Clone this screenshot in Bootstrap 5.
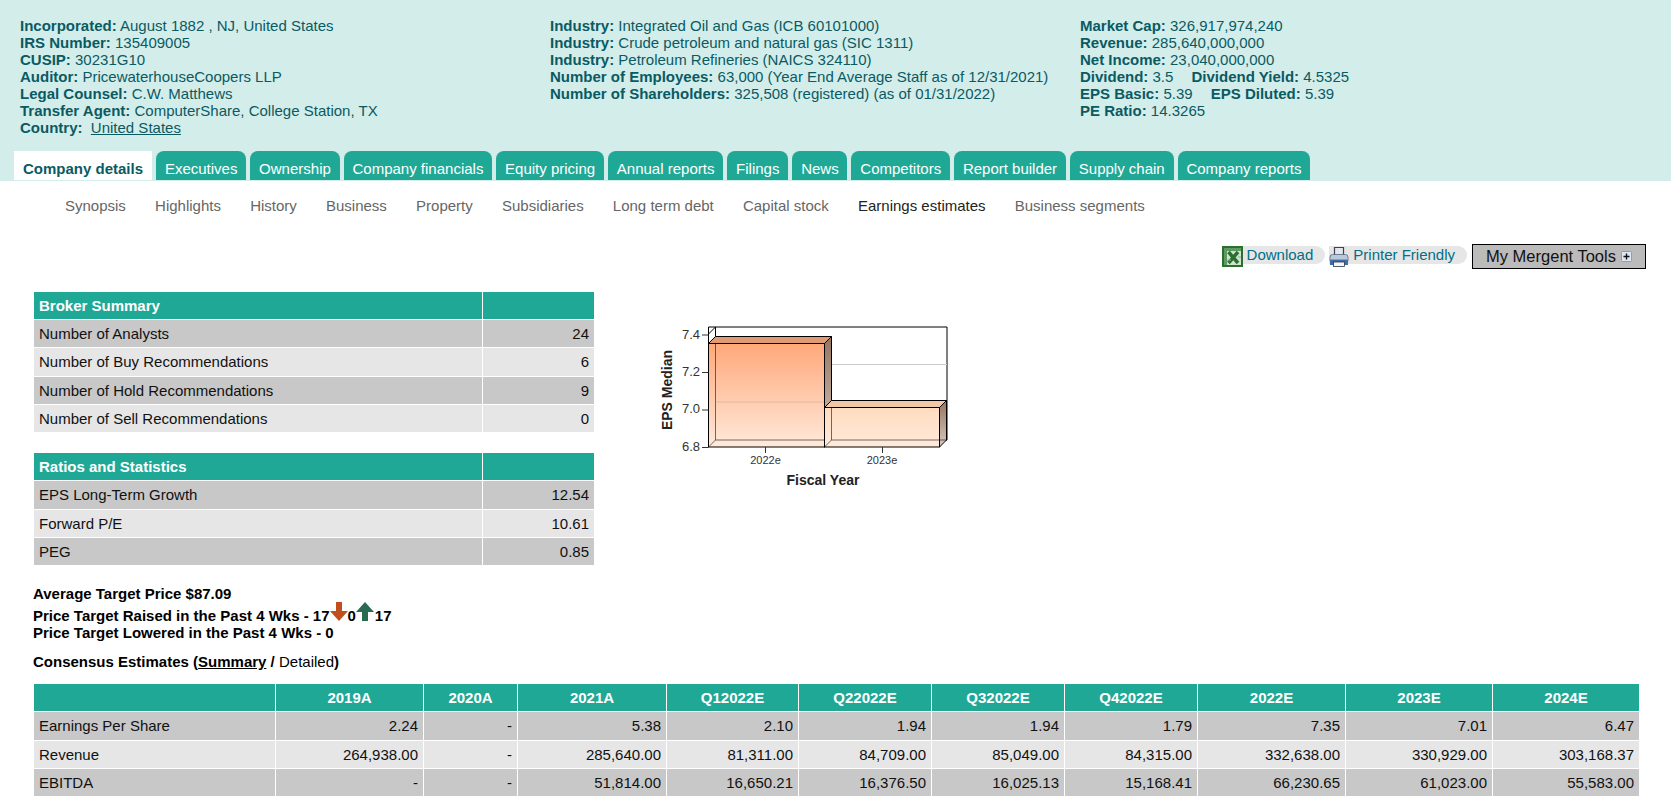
<!DOCTYPE html>
<html lang="en">
<head>
<meta charset="utf-8">
<title>Company details</title>
<link href="https://cdn.jsdelivr.net/npm/bootstrap@5.3.0/dist/css/bootstrap.min.css" rel="stylesheet">
<style>
body{font-family:"Liberation Sans",Arial,sans-serif;font-size:15px;line-height:17px;color:#000;background:#fff;overflow:hidden}
.co-head{background:#d3edea;color:#0a5a63;padding:17px 0 1px 14px}
.co-info{padding-left:6px;height:134px}
.co-col{width:530px;flex:none}
.co-col b{font-weight:700}
.co-col a{color:#0a5a63}
.co-gap{margin-left:14px}
.tabs{display:flex;gap:4px;height:29px}
.tab-i{background:#20a896;color:#fff;padding:9px 8.85px 0;border-radius:8px 8px 0 0;text-decoration:none;white-space:nowrap;flex:none}
.tab-i.on{background:#fff;color:#0a5a63;font-weight:700;border-radius:0;padding:9px 9px 0}
.subs{display:flex;gap:29.2px;padding:16px 0 0 65px;height:63px}
.subs a{color:#666;text-decoration:none;white-space:nowrap}
.subs a.on{color:#222}
.tools{display:flex;justify-content:flex-end;align-items:center;height:25px;padding-right:25px;gap:4px}
.pill{display:flex;align-items:flex-start;color:#006f88;background:#e6e6e6;border-radius:0 10px 10px 0;height:18px;padding-right:12px;text-decoration:none;white-space:nowrap;margin-top:-3px}
.pill svg{margin:0 4px -3px 0;flex:none}
.mytools{background:#bbb;border:1px solid #000;color:#111;font-size:16.5px;width:174px;height:25px;display:flex;align-items:center;justify-content:center;gap:5px;margin-left:1px}
.main{padding:22px 0 0 33px}
.table.mrg{table-layout:fixed;margin:0;border-collapse:collapse;color:#111}
.table.mrg>*>tr>*{background:#c8c8c8;box-shadow:none;border:1px solid #fff;padding:0 5px 1px;height:28px;vertical-align:middle;font-weight:400;color:#111}
.table.mrg>tbody>tr:nth-child(even)>*{background:#e6e6e6}
.table.mrg>thead>tr>*{background:#20a896;color:#fff;font-weight:700}
.table.mrg>tbody>tr.tall>*{height:29px}
.table.mrg td.num{text-align:right}
.table.mrg th.mid{text-align:center}
.side{width:562px;flex:none}
.table.mrg.tb-gap{margin-top:19px}
.chart-box{margin:19px 0 0 45px}
.chart-box text{font-family:"Liberation Sans",Arial,sans-serif}
.notes{font-weight:700;color:#000;margin-top:19px}
.notes .raised{display:flex;align-items:flex-start;height:17px;margin-top:5px}
.notes svg{flex:none;margin:-5px 0 -3px}
.notes svg.upa{margin-right:1px}
.cons{font-weight:700;margin:12px 0 13px}
.cons a{color:#000}
.cons span{font-weight:400}
.wide{width:1607px}
</style>
</head>
<body>
<div class="co-head">
  <div class="co-info d-flex">
    <div class="co-col">
      <div><b>Incorporated:</b> August 1882 , NJ, United States</div>
      <div><b>IRS Number:</b> 135409005</div>
      <div><b>CUSIP:</b> 30231G10</div>
      <div><b>Auditor:</b> PricewaterhouseCoopers LLP</div>
      <div><b>Legal Counsel:</b> C.W. Matthews</div>
      <div><b>Transfer Agent:</b> ComputerShare, College Station, TX</div>
      <div><b>Country:</b>&nbsp; <a href="#">United States</a></div>
    </div>
    <div class="co-col">
      <div><b>Industry:</b> Integrated Oil and Gas (ICB 60101000)</div>
      <div><b>Industry:</b> Crude petroleum and natural gas (SIC 1311)</div>
      <div><b>Industry:</b> Petroleum Refineries (NAICS 324110)</div>
      <div><b>Number of Employees:</b> 63,000 (Year End Average Staff as of 12/31/2021)</div>
      <div><b>Number of Shareholders:</b> 325,508 (registered) (as of 01/31/2022)</div>
    </div>
    <div class="co-col">
      <div><b>Market Cap:</b> 326,917,974,240</div>
      <div><b>Revenue:</b> 285,640,000,000</div>
      <div><b>Net Income:</b> 23,040,000,000</div>
      <div><b>Dividend:</b> 3.5 <b class="co-gap">Dividend Yield:</b> 4.5325</div>
      <div><b>EPS Basic:</b> 5.39 <b class="co-gap">EPS Diluted:</b> 5.39</div>
      <div><b>PE Ratio:</b> 14.3265</div>
    </div>
  </div>
  <nav class="tabs">
    <a class="tab-i on" href="#">Company details</a>
    <a class="tab-i" href="#">Executives</a>
    <a class="tab-i" href="#">Ownership</a>
    <a class="tab-i" href="#">Company financials</a>
    <a class="tab-i" href="#">Equity pricing</a>
    <a class="tab-i" href="#">Annual reports</a>
    <a class="tab-i" href="#">Filings</a>
    <a class="tab-i" href="#">News</a>
    <a class="tab-i" href="#">Competitors</a>
    <a class="tab-i" href="#">Report builder</a>
    <a class="tab-i" href="#">Supply chain</a>
    <a class="tab-i" href="#">Company reports</a>
  </nav>
</div>
<nav class="subs">
  <a href="#">Synopsis</a><a href="#">Highlights</a><a href="#">History</a><a href="#">Business</a><a href="#">Property</a><a href="#">Subsidiaries</a><a href="#">Long term debt</a><a href="#">Capital stock</a><a class="on" href="#">Earnings estimates</a><a href="#">Business segments</a>
</nav>
<div class="tools">
  <a class="pill" href="#">
    <svg width="21" height="21" viewBox="0 0 21 21"><rect width="21" height="21" fill="#2b7030"/><rect x="2" y="2" width="17" height="17" fill="#cfe3d0"/><path d="M2 2h17v3H2zM2 5h3v14H2z" fill="#5f9a63"/><path d="M6.500 6l9.500 11M16 6L6.500 17" stroke="#2b7030" stroke-width="3.500"/><path d="M16 11h3M5 14h4" stroke="#8db790"/></svg>
    Download
  </a>
  <a class="pill" href="#">
    <svg width="20" height="21" viewBox="0 0 20 21"><path d="M5.500 9V1.500h9V9" fill="#e4e7ea" stroke="#3c4350" stroke-width="1.200"/><path d="M1 11q0-2.500 2.500-2.500h13q2.500 0 2.500 2.500v4H1z" fill="#b9c8dc" stroke="#59677c" stroke-width=".8"/><path d="M1 14h18v5H1z" fill="#3f6ea6"/><path d="M1 13.500h18" stroke="#7fa2cf"/><rect x="4.500" y="16" width="11" height="4.500" fill="#f4f5f6" stroke="#2b3548" stroke-width=".8"/></svg>
    Printer Friendly
  </a>
  <div class="mytools">My Mergent Tools
    <svg width="11" height="11" viewBox="0 0 11 11"><rect x=".5" y=".5" width="10" height="10" rx="1" fill="#dfe7f2" stroke="#8b9db8"/><path d="M5.500 2.500v6M2.500 5.500h6" stroke="#111" stroke-width="1.400"/></svg>
  </div>
</div>
<div class="main">
  <div class="d-flex">
    <div class="side">
      <table class="table mrg">
        <colgroup><col style="width:449px"><col></colgroup>
        <thead><tr><th>Broker Summary</th><th></th></tr></thead>
        <tbody>
          <tr><td>Number of Analysts</td><td class="num">24</td></tr>
          <tr class="tall"><td>Number of Buy Recommendations</td><td class="num">6</td></tr>
          <tr><td>Number of Hold Recommendations</td><td class="num">9</td></tr>
          <tr><td>Number of Sell Recommendations</td><td class="num">0</td></tr>
        </tbody>
      </table>
      <table class="table mrg tb-gap">
        <colgroup><col style="width:449px"><col></colgroup>
        <thead><tr><th>Ratios and Statistics</th><th></th></tr></thead>
        <tbody>
          <tr class="tall"><td>EPS Long-Term Growth</td><td class="num">12.54</td></tr>
          <tr><td>Forward P/E</td><td class="num">10.61</td></tr>
          <tr><td>PEG</td><td class="num">0.85</td></tr>
        </tbody>
      </table>
    </div>
    <div class="chart-box">
      <svg width="320" height="190" viewBox="0 0 320 190">
        <defs>
          <linearGradient id="g1" x1="0" y1="0" x2="0" y2="1"><stop offset="0" stop-color="#ffa87a"/><stop offset="1" stop-color="#ffeadb"/></linearGradient>
          <linearGradient id="g2" x1="0" y1="0" x2="0" y2="1"><stop offset="0" stop-color="#ffdcc0"/><stop offset="1" stop-color="#ffeadb"/></linearGradient>
          <linearGradient id="g3" x1="0" y1="0" x2="0" y2="1"><stop offset="0" stop-color="#94745f"/><stop offset="1" stop-color="#d9c9bc"/></linearGradient>
        </defs>
        <g fill="none" stroke="#000">
          <path d="M68.500 24V17H307V130H75.500V17M68.500 24V137M68.500 24L75.500 17"/>
        </g>
        <path d="M75.500 92H307M75.500 54.500H307" stroke="#ccc"/>
        <path d="M68.500 33.500l7-7H191.500l-7 7z" fill="#e09a75" stroke="#000"/>
        <path d="M184.500 33.500l7-7V130l-7 7z" fill="url(#g3)" stroke="#000"/>
        <rect x="68.500" y="33.500" width="116" height="103.500" fill="url(#g1)" stroke="#000"/>
        <path d="M68.500 137l7-7H191.500M75.500 33.500V130" fill="none" stroke="#000" stroke-opacity=".55"/>
        <path d="M75.500 92H184" stroke="#b9a090" stroke-opacity=".45"/>
        <path d="M184.500 97.500l7-7H306.500l-7 7z" fill="#f2c9a8" stroke="#000"/>
        <path d="M299.500 97.500l7-7V130l-7 7z" fill="url(#g3)" stroke="#000"/>
        <rect x="184.500" y="97.500" width="115" height="39.500" fill="url(#g2)" stroke="#000"/>
        <path d="M184.500 137l7-7H306.500M191.500 97.500V130" fill="none" stroke="#000" stroke-opacity=".55"/>
        <path d="M62 25h6.500M62 62.500h6.500M62 100h6.500M62 137.500h6.500M125.500 137v6M242.500 137v6" stroke="#333"/>
        <g font-size="13" fill="#333" text-anchor="end">
          <text x="60" y="29">7.4</text><text x="60" y="66">7.2</text><text x="60" y="103">7.0</text><text x="60" y="141">6.8</text>
        </g>
        <g font-size="11" fill="#333" text-anchor="middle">
          <text x="125.500" y="154">2022e</text><text x="242" y="154">2023e</text>
        </g>
        <text x="183" y="175" font-size="14" font-weight="700" fill="#222" text-anchor="middle">Fiscal Year</text>
        <text transform="translate(32 80) rotate(-90)" font-size="14" font-weight="700" fill="#222" text-anchor="middle">EPS Median</text>
      </svg>
    </div>
  </div>
  <div class="notes">
    <div>Average Target Price $87.09</div>
    <div class="raised">Price Target Raised in the Past 4 Wks - 17<svg width="18" height="20" viewBox="0 0 18 20"><path d="M6 0h6v9h6l-9 10-9-10h6z" fill="#bf4f1e"/></svg>0<svg class="upa" width="18" height="20" viewBox="0 0 18 20"><path d="M9 0l9 10h-6v9H6v-9H0z" fill="#2a6b50"/></svg>17</div>
    <div>Price Target Lowered in the Past 4 Wks - 0</div>
  </div>
  <div class="cons">Consensus Estimates (<a href="#">Summary</a> / <span>Detailed</span>)</div>
  <table class="table mrg wide">
    <colgroup><col style="width:242px"><col style="width:148px"><col style="width:94px"><col style="width:149px"><col style="width:132px"><col style="width:133px"><col style="width:133px"><col style="width:133px"><col style="width:148px"><col style="width:147px"><col style="width:147px"></colgroup>
    <thead><tr><th></th><th class="mid">2019A</th><th class="mid">2020A</th><th class="mid">2021A</th><th class="mid">Q12022E</th><th class="mid">Q22022E</th><th class="mid">Q32022E</th><th class="mid">Q42022E</th><th class="mid">2022E</th><th class="mid">2023E</th><th class="mid">2024E</th></tr></thead>
    <tbody>
      <tr class="tall"><td>Earnings Per Share</td><td class="num">2.24</td><td class="num">-</td><td class="num">5.38</td><td class="num">2.10</td><td class="num">1.94</td><td class="num">1.94</td><td class="num">1.79</td><td class="num">7.35</td><td class="num">7.01</td><td class="num">6.47</td></tr>
      <tr><td>Revenue</td><td class="num">264,938.00</td><td class="num">-</td><td class="num">285,640.00</td><td class="num">81,311.00</td><td class="num">84,709.00</td><td class="num">85,049.00</td><td class="num">84,315.00</td><td class="num">332,638.00</td><td class="num">330,929.00</td><td class="num">303,168.37</td></tr>
      <tr><td>EBITDA</td><td class="num">-</td><td class="num">-</td><td class="num">51,814.00</td><td class="num">16,650.21</td><td class="num">16,376.50</td><td class="num">16,025.13</td><td class="num">15,168.41</td><td class="num">66,230.65</td><td class="num">61,023.00</td><td class="num">55,583.00</td></tr>
    </tbody>
  </table>
</div>
<script src="https://cdn.jsdelivr.net/npm/bootstrap@5.3.0/dist/js/bootstrap.bundle.min.js"></script>
</body>
</html>
